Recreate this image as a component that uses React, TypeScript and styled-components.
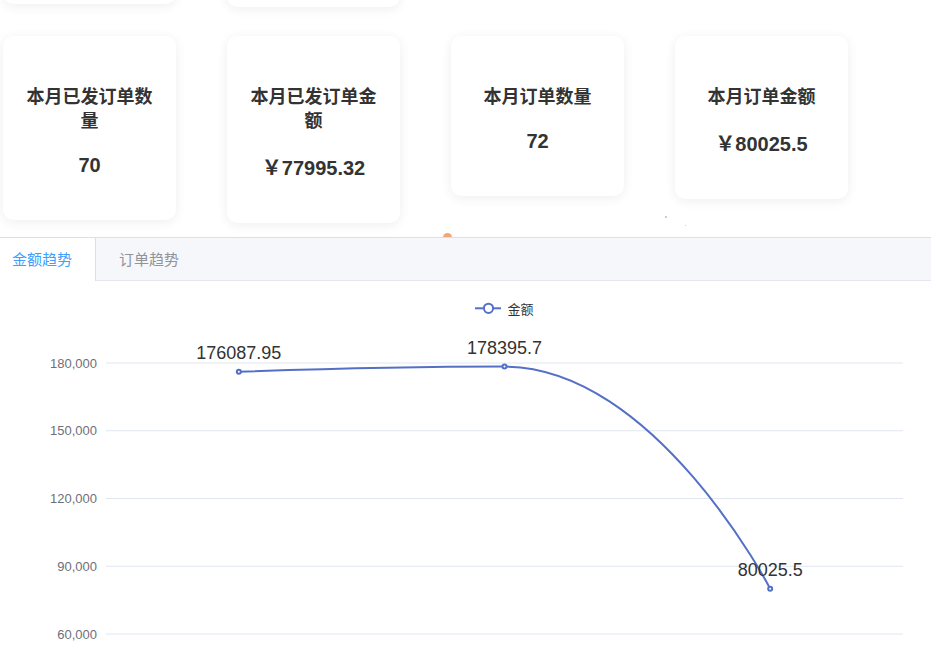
import React from 'react';
import styled, { createGlobalStyle } from 'styled-components';

const GlobalStyle = createGlobalStyle`
  html, body {
    margin: 0;
    padding: 0;
    background: #ffffff;
    overflow: hidden;
  }
  body {
    font-family: "Noto Sans CJK SC", "Noto Sans", sans-serif;
    color: #333333;
  }
`;

const Page = styled.div`
  margin-top: -180px;
  width: 931px;
`;

const StatRow = styled.div<{ $gapBelow: number }>`
  display: grid;
  grid-template-columns: repeat(4, 173px);
  column-gap: 51px;
  align-items: start;
  padding-left: 3px;
  margin-bottom: ${(p) => p.$gapBelow}px;
`;

const Card = styled.div`
  background: #ffffff;
  border-radius: 10px;
  box-shadow: 0 2px 12px rgba(0, 0, 0, 0.07);
  padding: 47px 20px 43px;
  text-align: center;
`;

const StubCard = styled(Card)<{ $height: number }>`
  box-sizing: border-box;
  height: ${(p) => p.$height}px;
`;

const CardTitle = styled.h3`
  margin: 0 0 22px;
  font-family: "Noto Sans CJK SC", sans-serif;
  font-size: 18px;
  line-height: 24px;
  font-weight: 700;
  color: #333333;
`;

const CardValue = styled.div`
  font-family: "Liberation Sans", "Noto Sans CJK SC", sans-serif;
  font-size: 20px;
  line-height: 24px;
  font-weight: 700;
  color: #333333;
`;

const Currency = styled.span`
  display: inline-block;
  padding-top: 3px;
`;

const Tabs = styled.section`
  position: relative;
`;

const Spark = styled.span<{ $x: number; $y: number; $size: number; $color: string }>`
  position: absolute;
  left: ${(p) => p.$x}px;
  top: ${(p) => p.$y}px;
  width: ${(p) => p.$size}px;
  height: ${(p) => p.$size}px;
  border-radius: 50%;
  background: ${(p) => p.$color};
  z-index: 0;
`;

const TabBar = styled.div`
  position: relative;
  z-index: 1;
  display: flex;
  align-items: flex-start;
  height: 42px;
  background: #f5f7fa;
  border-top: 1px solid #dcdfe6;
  border-bottom: 1px solid #e4e7ed;
`;

const Tab = styled.div<{ $active?: boolean }>`
  height: 43px;
  line-height: 42px;
  padding: 0 23px;
  font-size: 15px;
  font-family: "Noto Sans CJK SC", sans-serif;
  color: ${(p) => (p.$active ? '#409eff' : '#909399')};
  background: ${(p) => (p.$active ? '#ffffff' : 'transparent')};
  border-right: 1px solid ${(p) => (p.$active ? '#dcdfe6' : 'transparent')};
  box-sizing: border-box;
  &:first-child {
    padding-left: 12px;
  }
`;

const TabPanel = styled.div`
  background: #ffffff;
`;

const ChartSvg = styled.svg`
  display: block;
`;

type Stat = { title: string; value: string; currency?: boolean };

/* heights of the row above, scrolled out of view (only the card bottoms show) */
const scrolledRowHeights = [184, 187, 160, 163];

const monthRow: Stat[] = [
  { title: '本月已发订单数量', value: '70' },
  { title: '本月已发订单金额', value: '77995.32', currency: true },
  { title: '本月订单数量', value: '72' },
  { title: '本月订单金额', value: '80025.5', currency: true },
];

function StatCard({ stat }: { stat: Stat }) {
  return (
    <Card>
      <CardTitle>{stat.title}</CardTitle>
      <CardValue>
        {stat.currency && <Currency>￥</Currency>}
        {stat.value}
      </CardValue>
    </Card>
  );
}

const PLOT_LEFT = 106;
const PLOT_RIGHT = 903;
const TOP_Y = 82;
const STEP = 67.75;
const yOf = (v: number) => TOP_Y + ((180000 - v) / 30000) * STEP;

const data = [176087.95, 178395.7, 80025.5];
const band = (PLOT_RIGHT - PLOT_LEFT) / data.length;
const pts = data.map((v, i) => ({ x: PLOT_LEFT + band * (i + 0.5), y: yOf(v), v }));

function smoothPath() {
  const [p1, p2, p3] = pts;
  const smooth = 0.5;
  const vx0 = p3.x - p1.x;
  const vy0 = p3.y - p1.y;
  const lenPrev = Math.hypot(p2.x - p1.x, p2.y - p1.y);
  const lenNext = Math.hypot(p3.x - p2.x, p3.y - p2.y);
  const ratio = lenNext / (lenNext + lenPrev);
  let nx = p2.x + vx0 * smooth * ratio;
  let ny = p2.y + vy0 * smooth * ratio;
  let cx1 = p2.x - (nx - p2.x) * (lenPrev / lenNext);
  let cy1 = p2.y - (ny - p2.y) * (lenPrev / lenNext);
  cy1 = Math.min(cy1, Math.max(p1.y, p2.y));
  cy1 = Math.max(cy1, Math.min(p1.y, p2.y));
  cx1 = Math.min(cx1, Math.max(p1.x, p2.x));
  cx1 = Math.max(cx1, Math.min(p1.x, p2.x));
  nx = p2.x + (p2.x - cx1) * (lenNext / lenPrev);
  ny = p2.y + (p2.y - cy1) * (lenNext / lenPrev);
  return `M${p1.x},${p1.y} C${p1.x},${p1.y} ${cx1},${cy1} ${p2.x},${p2.y} C${nx},${ny} ${p3.x},${p3.y} ${p3.x},${p3.y}`;
}

const ticks = [180000, 150000, 120000, 90000, 60000];

function AmountChart() {
  return (
    <ChartSvg width={931} height={368} viewBox="0 0 931 368">
      <g>
        <line x1={475} y1={27.3} x2={501} y2={27.3} stroke="#5470c6" strokeWidth={2} />
        <circle cx={488.5} cy={27.3} r={4.6} fill="#ffffff" stroke="#5470c6" strokeWidth={2} />
        <text
          x={507.5}
          y={27.3}
          dominantBaseline="central"
          fontSize={13}
          fill="#333333"
          fontFamily='"Noto Sans CJK SC", sans-serif'
        >
          金额
        </text>
      </g>
      {ticks.map((t) => (
        <g key={t}>
          <line x1={PLOT_LEFT} x2={PLOT_RIGHT} y1={yOf(t)} y2={yOf(t)} stroke="#e0e6f1" strokeWidth={1} />
          <text
            x={97}
            y={yOf(t) + 4.6}
            textAnchor="end"
            fontSize={13}
            fill="#6e7079"
            fontFamily='"Liberation Sans", sans-serif'
          >
            {t.toLocaleString('en-US')}
          </text>
        </g>
      ))}
      <path d={smoothPath()} fill="none" stroke="#5470c6" strokeWidth={2} strokeLinejoin="round" />
      {pts.map((p) => (
        <g key={p.v}>
          <circle cx={p.x} cy={p.y} r={2} fill="#ffffff" stroke="#5470c6" strokeWidth={2} />
          <text
            x={p.x}
            y={p.y - 12.5}
            textAnchor="middle"
            fontSize={18}
            fill="#333333"
            fontFamily='"Liberation Sans", sans-serif'
          >
            {p.v}
          </text>
        </g>
      ))}
    </ChartSvg>
  );
}

export default function App() {
  return (
    <>
      <GlobalStyle />
      <Page>
        <StatRow $gapBelow={29}>
          {scrolledRowHeights.map((h, i) => (
            <StubCard key={i} $height={h} />
          ))}
        </StatRow>
        <StatRow $gapBelow={14}>
          {monthRow.map((s) => (
            <StatCard key={s.title} stat={s} />
          ))}
        </StatRow>
        <Tabs>
          <Spark $x={442.5} $y={-4.5} $size={9} $color="#f2a676" />
          <Spark $x={665} $y={-21} $size={2} $color="#c9b8ad" />
          <Spark $x={684.5} $y={-12.5} $size={1.5} $color="#f0b48c" />
          <TabBar>
            <Tab $active>金额趋势</Tab>
            <Tab>订单趋势</Tab>
          </TabBar>
          <TabPanel>
            <AmountChart />
          </TabPanel>
        </Tabs>
      </Page>
    </>
  );
}
